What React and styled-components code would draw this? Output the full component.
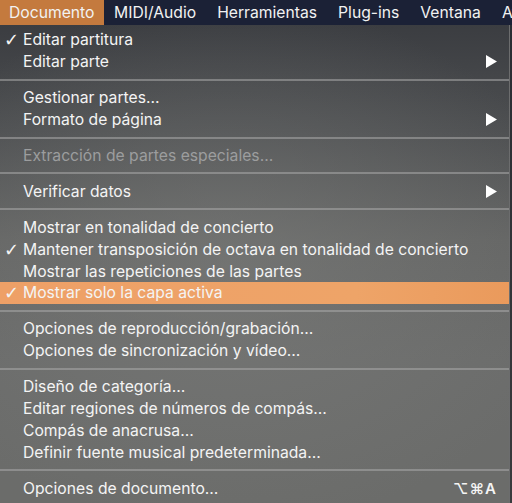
import React from 'react';
import styled, { createGlobalStyle } from 'styled-components';

const GlobalStyle = createGlobalStyle`
  html, body {
    margin: 0;
    padding: 0;
    background: #2b2c2f;
  }
  body {
    font-family: Inter, "Liberation Sans", sans-serif;
    -webkit-font-smoothing: antialiased;
  }
`;

const menuBarItems = ['Documento', 'MIDI/Audio', 'Herramientas', 'Plug-ins', 'Ventana', 'Ayuda'];

const sections = [
  [
    { label: 'Editar partitura', checked: true },
    { label: 'Editar parte', submenu: true },
  ],
  [
    { label: 'Gestionar partes…' },
    { label: 'Formato de página', submenu: true },
  ],
  [{ label: 'Extracción de partes especiales…', disabled: true }],
  [{ label: 'Verificar datos', submenu: true }],
  [
    { label: 'Mostrar en tonalidad de concierto' },
    { label: 'Mantener transposición de octava en tonalidad de concierto', checked: true },
    { label: 'Mostrar las repeticiones de las partes' },
    { label: 'Mostrar solo la capa activa', checked: true, active: true },
  ],
  [
    { label: 'Opciones de reproducción/grabación…' },
    { label: 'Opciones de sincronización y vídeo…' },
  ],
  [
    { label: 'Diseño de categoría…' },
    { label: 'Editar regiones de números de compás…' },
    { label: 'Compás de anacrusa…' },
    { label: 'Definir fuente musical predeterminada…' },
  ],
  [{ label: 'Opciones de documento…', shortcut: '⌥⌘A' }],
];

const App = () => (
  <Screen>
    <GlobalStyle />
    <MenuBar>
      {menuBarItems.map((name, i) => (
        <BarItem key={name} $open={i === 0}>
          {name}
        </BarItem>
      ))}
    </MenuBar>
    <Body>
      <Dropdown>
        {sections.map((items, si) => (
          <React.Fragment key={si}>
            {si > 0 && <Separator />}
            {items.map((item) => (
              <Item key={item.label} $active={item.active} $disabled={item.disabled}>
                <Check>{item.checked ? '✓' : ''}</Check>
                <Label>{item.label}</Label>
                {item.submenu && (
                  <Arrow viewBox="0 0 11 13">
                    <path d="M0 0 L11 6.5 L0 13 Z" fill="#fff" />
                  </Arrow>
                )}
                {item.shortcut && <Shortcut>{item.shortcut}</Shortcut>}
              </Item>
            ))}
          </React.Fragment>
        ))}
      </Dropdown>
      <Behind />
    </Body>
  </Screen>
);

const Screen = styled.div`
  width: 512px;
  height: 503px;
  overflow: hidden;
  display: flex;
  flex-direction: column;
`;

const MenuBar = styled.div`
  height: 25px;
  flex-shrink: 0;
  display: flex;
  align-items: stretch;
  background: #1b2136;
  white-space: nowrap;
  overflow: hidden;
`;

const BarItem = styled.div`
  display: flex;
  align-items: center;
  padding: 0 10.5px;
  font-size: 15.7px;
  color: #f2f2f2;
  background: ${(p) => (p.$open ? '#c47a3e' : 'transparent')};
  flex-shrink: 0;
  &:first-child {
    padding: 0 9px 0 9px;
  }
`;

const Body = styled.div`
  flex: 1;
  display: flex;
`;

const Dropdown = styled.div`
  width: 509px;
  padding-top: 4px;
  display: flex;
  flex-direction: column;
  background:
    radial-gradient(ellipse 70% 55% at 45% 50%, rgba(125, 126, 124, 0.55), rgba(125, 126, 124, 0) 100%),
    linear-gradient(180deg, #3b3d41 0%, #4d4f51 22%, #646564 45%, #6b6c6b 70%, #6b6c6a 100%);
`;

const Behind = styled.div`
  flex: 1;
  background: linear-gradient(180deg, #2a2d33 0%, #3a3b3d 100%);
  border-left: 1px solid #6c6d6e;
`;

const Item = styled.div`
  height: 21.9px;
  display: flex;
  align-items: center;
  padding-right: 12px;
  font-size: 15.7px;
  color: ${(p) => (p.$disabled ? '#9c9d9e' : '#f4f4f4')};
  background: ${(p) =>
    p.$active ? 'linear-gradient(90deg, #eea067 0%, #eea468 70%, #ea9a5c 100%)' : 'transparent'};
  white-space: nowrap;
`;

const Check = styled.span`
  width: 23px;
  padding-left: 4px;
  box-sizing: border-box;
  font-size: 18px;
  font-weight: bold;
  font-family: "DejaVu Sans", sans-serif;
  flex-shrink: 0;
`;

const Label = styled.span`
  flex: 1;
`;

const Arrow = styled.svg`
  width: 11px;
  height: 13px;
`;

const Shortcut = styled.span`
  font-size: 15px;
  font-weight: 600;
  letter-spacing: 1px;
  color: #f4f4f4;
  font-family: Inter, "DejaVu Sans", sans-serif;
`;

const Separator = styled.div`
  height: 2px;
  margin: 6px 0;
  background: rgba(170, 170, 170, 0.55);
`;

export default App;
